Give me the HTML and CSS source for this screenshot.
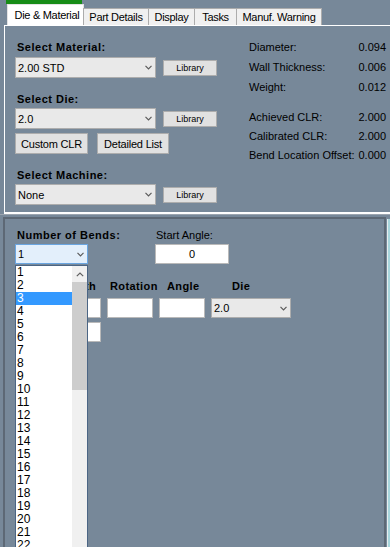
FILE: index.html
```html
<!DOCTYPE html>
<html lang="en">
<head>
    <meta charset="UTF-8">
    <meta name="viewport" content="width=device-width, initial-scale=1.0">
    <title>Bend Setup - Die &amp; Material</title>
    <link rel="stylesheet" href="styles.css">
</head>
<body>
    <!-- active tab marker -->
    <div class="strip"><div class="strip-mark"></div></div>

    <!-- tab headers -->
    <div class="tabs">
        <div class="tab tab-active">Die &amp; Material</div>
        <div class="tab tab-part">Part Details</div>
        <div class="tab tab-display">Display</div>
        <div class="tab tab-tasks">Tasks</div>
        <div class="tab tab-warn">Manuf. Warning</div>
    </div>

    <!-- Die & Material page -->
    <div class="page">
        <div class="left-col">
            <div class="label">Select Material:</div>
            <div class="pick-row">
                <div class="combo"><span>2.00 STD</span>
                    <svg width="7" height="5" viewBox="0 0 7 5"><path d="M0.5 0.8L3.5 3.8L6.5 0.8" fill="none" stroke="#5a5a5a" stroke-width="1.2"/></svg>
                </div>
                <button class="lib-btn">Library</button>
            </div>

            <div class="label label-gap">Select Die:</div>
            <div class="pick-row pick-row-tight">
                <div class="combo"><span>2.0</span>
                    <svg width="7" height="5" viewBox="0 0 7 5"><path d="M0.5 0.8L3.5 3.8L6.5 0.8" fill="none" stroke="#5a5a5a" stroke-width="1.2"/></svg>
                </div>
                <button class="lib-btn">Library</button>
            </div>
            <div class="btn-row">
                <button class="win-btn btn-custom">Custom CLR</button>
                <button class="win-btn btn-list">Detailed List</button>
            </div>

            <div class="label label-gap">Select Machine:</div>
            <div class="pick-row pick-row-tight">
                <div class="combo"><span>None</span>
                    <svg width="7" height="5" viewBox="0 0 7 5"><path d="M0.5 0.8L3.5 3.8L6.5 0.8" fill="none" stroke="#5a5a5a" stroke-width="1.2"/></svg>
                </div>
                <button class="lib-btn">Library</button>
            </div>
        </div>

        <div class="right-col">
            <div class="stats">
                <span>Diameter:</span><span class="val">0.094</span>
                <span>Wall Thickness:</span><span class="val">0.006</span>
                <span>Weight:</span><span class="val">0.012</span>
            </div>
            <div class="stats stats-clr">
                <span>Achieved CLR:</span><span class="val">2.000</span>
                <span>Calibrated CLR:</span><span class="val">2.000</span>
                <span>Bend Location Offset:</span><span class="val">0.000</span>
            </div>
        </div>
    </div>
    <div class="sep"></div>

    <!-- bends panel -->
    <div class="lower-wrap">
        <div class="lower">
            <div class="bend-top">
                <div class="field-bends">
                    <div class="label">Number of Bends:</div>
                    <div class="combo combo-focus"><span>1</span>
                        <svg width="7" height="5" viewBox="0 0 7 5"><path d="M0.5 0.8L3.5 3.8L6.5 0.8" fill="none" stroke="#5a5a5a" stroke-width="1.2"/></svg>
                    </div>
                </div>
                <div class="field-start">
                    <div class="plain-label">Start Angle:</div>
                    <div class="textbox textbox-center">0</div>
                </div>
            </div>

            <div class="bend-grid">
                <div class="col-head head-length">Length</div>
                <div class="col-head head-rot">Rotation</div>
                <div class="col-head head-angle">Angle</div>
                <div class="col-head head-die">Die</div>

                <div class="textbox"></div>
                <div class="textbox"></div>
                <div class="textbox"></div>
                <div class="combo combo-grid"><span>2.0</span>
                    <svg width="7" height="5" viewBox="0 0 7 5"><path d="M0.5 0.8L3.5 3.8L6.5 0.8" fill="none" stroke="#5a5a5a" stroke-width="1.2"/></svg>
                </div>

                <div class="textbox"></div>
            </div>
        </div>
        <div class="edge"></div>
    </div>

    <!-- open dropdown of Number of Bends -->
    <div class="dropdown">
        <ul class="drop-list">
            <li>1</li>
            <li>2</li>
            <li class="selected">3</li>
            <li>4</li>
            <li>5</li>
            <li>6</li>
            <li>7</li>
            <li>8</li>
            <li>9</li>
            <li>10</li>
            <li>11</li>
            <li>12</li>
            <li>13</li>
            <li>14</li>
            <li>15</li>
            <li>16</li>
            <li>17</li>
            <li>18</li>
            <li>19</li>
            <li>20</li>
            <li>21</li>
            <li>22</li>
        </ul>
        <div class="scrollbar">
            <div class="scroll-up">
                <svg width="8" height="5" viewBox="0 0 8 5"><path d="M0.8 4.2L4 1L7.2 4.2" fill="none" stroke="#606060" stroke-width="1.2"/></svg>
            </div>
            <div class="scroll-thumb"></div>
        </div>
    </div>
</body>
</html>
```

FILE: styles.css
```css
/* base */
body {
    margin: 0;
    width: 390px;
    height: 547px;
    overflow: hidden;
    position: relative;
    background: #778899;
    font-family: "Liberation Sans", Arial, sans-serif;
    font-size: 11px;
    color: #000;
}

/* green marker above the active tab */
.strip {
    height: 4px;
    padding-left: 6px;
}

.strip-mark {
    width: 76px;
    height: 4px;
    background: #178c17;
}

/* tabs */
.tabs {
    display: flex;
    align-items: flex-end;
    height: 21px;
    padding-left: 7px;
}

.tab {
    box-sizing: border-box;
    height: 17px;
    line-height: 16px;
    text-align: center;
    letter-spacing: -0.3px;
    background: #f0f0f0;
    border: 1px solid #acacac;
    border-bottom: none;
    margin-left: -1px;
    white-space: nowrap;
}

.tab-active {
    width: 77px;
    height: 21px;
    line-height: 20px;
    margin-left: 0;
    padding-left: 3px;
    background: #fff;
    border-color: #e3e3e3;
}

.tab-part { width: 66px; }
.tab-display { width: 47px; }
.tab-tasks { width: 43px; }
.tab-warn { width: 86px; }

/* Die & Material page */
.page {
    display: flex;
    height: 186px;
    margin-left: 4px;
    border-top: 1px solid #fff;
    border-left: 1px solid #fff;
    border-bottom: 2px solid #fff;
}

.left-col {
    flex: none;
    width: 202px;
    padding: 14px 0 0 10px;
}

.label {
    font-weight: bold;
    letter-spacing: 0.5px;
    line-height: 14px;
    padding-left: 2px;
    white-space: nowrap;
}

.label-gap {
    margin-top: 14px;
}

.pick-row {
    display: flex;
    align-items: center;
    gap: 7px;
    margin-top: 3px;
}

.pick-row-tight {
    margin-top: 2px;
}

.combo {
    box-sizing: border-box;
    width: 141px;
    height: 21px;
    display: flex;
    align-items: center;
    justify-content: space-between;
    padding: 0 3px 0 2px;
    background: #e9e9e9;
    border: 1px solid #adadad;
}

.lib-btn {
    width: 54px;
    height: 16px;
    padding: 0;
    font-family: inherit;
    font-size: 9px;
    color: #000;
    background: #e1e1e1;
    border: 1px solid #adadad;
}

.btn-row {
    display: flex;
    gap: 9px;
    margin-top: 4px;
}

.win-btn {
    height: 21px;
    padding: 0;
    font-family: inherit;
    font-size: 11px;
    letter-spacing: -0.2px;
    color: #000;
    background: #e1e1e1;
    border: 1px solid #adadad;
}

.btn-custom { width: 73px; }
.btn-list { width: 72px; }

.right-col {
    flex: none;
    width: 137px;
    margin-left: 32px;
    padding-top: 11px;
}

.stats {
    display: grid;
    grid-template-columns: 1fr auto;
    grid-auto-rows: 20px;
    align-items: center;
    white-space: nowrap;
}

.stats-clr {
    grid-auto-rows: 19px;
    margin-top: 10px;
}

.val {
    text-align: right;
}

.sep {
    height: 1px;
    background: #9ca5af;
    margin-bottom: 2px;
}

/* bends panel */
.lower-wrap {
    display: flex;
    height: 340px;
}

.lower {
    flex: none;
    width: 379px;
    margin-left: 3px;
    border: 2px solid #5d6875;
    border-bottom: none;
}

.edge {
    flex: none;
    width: 2px;
    margin: 2px 0 0 1px;
    border-left: 1px solid #e6ecee;
    background: #a7d5dc;
}

.bend-top {
    display: flex;
    padding: 9px 0 0 10px;
}

.field-bends {
    width: 140px;
}

.field-bends .combo {
    margin-top: 2px;
}

.combo-focus {
    width: 73px;
    height: 20px;
    background: #e3effb;
    border-color: #6aa5e0;
}

.plain-label {
    line-height: 14px;
    padding-left: 1px;
}

.textbox {
    box-sizing: border-box;
    height: 20px;
    line-height: 18px;
    background: #fff;
    border: 1px solid #b9b9b9;
}

.field-start .textbox {
    width: 74px;
    margin-top: 2px;
}

.textbox-center {
    text-align: center;
}

.bend-grid {
    display: grid;
    grid-template-columns: 47px 46px 46px 80px;
    grid-template-rows: 15px 20px 20px;
    column-gap: 6px;
    row-gap: 4px;
    margin: 15px 0 0 49px;
}

.col-head {
    font-weight: bold;
    letter-spacing: 0.4px;
    line-height: 14px;
    white-space: nowrap;
}

.head-length { padding-left: 3px; }
.head-rot { padding-left: 3px; }
.head-angle { padding-left: 8px; }
.head-die { padding-left: 21px; }

.combo-grid {
    width: 80px;
    height: 20px;
}

/* open list over the panel */
.dropdown {
    position: absolute;
    left: 15px;
    top: 265px;
    width: 73px;
    height: 300px;
    box-sizing: border-box;
    display: flex;
    background: #fff;
    border: 1px solid #4b6584;
}

.drop-list {
    flex: none;
    width: 56px;
    margin: 0;
    padding: 0;
    list-style: none;
    font-size: 12px;
    line-height: 13px;
}

.drop-list li {
    padding-left: 1px;
}

.drop-list .selected {
    background: #3399ff;
    color: #fff;
}

.scrollbar {
    flex: none;
    width: 15px;
    background: #f0f0f0;
}

.scroll-up {
    height: 16px;
    display: flex;
    align-items: center;
    justify-content: center;
}

.scroll-thumb {
    height: 108px;
    background: #cdcdcd;
}
```
